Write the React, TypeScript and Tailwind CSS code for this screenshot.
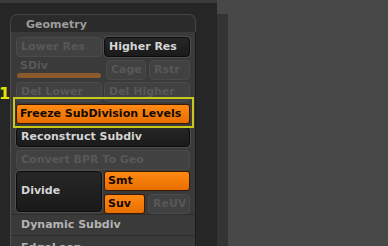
const font = { fontFamily: '"DejaVu Sans", "Liberation Sans", sans-serif' }

function Dim({ label, className = "" }: { label: string; className?: string }) {
  return (
    <div
      className={`flex h-[20px] items-center overflow-hidden whitespace-nowrap rounded-[4px] border border-[#4a4a4a] bg-[#414141] px-[4px] text-[11px] font-bold text-[#585858] ${className}`}
    >
      {label}
    </div>
  )
}

function Dark({ label, className = "" }: { label: string; className?: string }) {
  return (
    <div
      className={`flex h-[20px] items-center overflow-hidden whitespace-nowrap rounded-[4px] border border-[#0c0c0c] bg-gradient-to-b from-[#262626] to-[#1a1a1a] px-[4px] text-[11px] font-bold text-[#d4d4d4] shadow-[0_0_0_1px_#4e4e4e] ${className}`}
    >
      {label}
    </div>
  )
}

function Orange({ label, className = "" }: { label: string; className?: string }) {
  return (
    <div
      className={`flex h-[20px] items-center overflow-hidden whitespace-nowrap rounded-[3px] border border-[#3a1a00] bg-gradient-to-b from-[#ff8a12] to-[#e86e00] px-[3px] text-[11px] font-bold text-[#140800] ${className}`}
    >
      {label}
    </div>
  )
}

export default function App() {
  return (
    <div className="relative flex h-[246px] w-[388px] overflow-hidden bg-[#484848]" style={font}>
      <div className="flex w-[217px] flex-col">
        <div className="h-[3px] shrink-0 bg-[#3b3b3b]" />
        <div className="flex-1 bg-[#262626] pl-[10px] pt-[11px]">
          <div className="w-[186px]">
            <div className="flex h-[18px] items-center rounded-t-[7px] border border-b-0 border-[#444] bg-[#2b2b2b] pl-[15px] pt-[3px] text-[11px] font-bold text-[#9c9c9c]">
              Geometry
            </div>
            <div className="border-x border-l-[#505050] border-r-[#1c1c1c] bg-[#3a3a3a]">
              <div className="flex flex-col gap-[3px] px-[5px] pt-[5px]">
                <div className="flex gap-[2px]">
                  <Dim label="Lower Res" className="w-[86px]" />
                  <Dark label="Higher Res" className="w-[86px]" />
                </div>
                <div className="flex gap-[3px]">
                  <div className="flex w-[86px] flex-col pl-[1px]">
                    <span className="pl-[3px] text-[11px] font-bold leading-[11px] text-[#585858]">SDiv</span>
                    <div className="mt-[2px] h-[5px] w-[84px] rounded-full bg-[#8a5a2c]" />
                  </div>
                  <Dim label="Cage" className="ml-[1px] w-[40px]" />
                  <Dim label="Rstr" className="w-[41px]" />
                </div>
                <div className="mt-[-1px] flex gap-[2px]">
                  <Dim label="Del Lower" className="w-[86px]" />
                  <Dim label="Del Higher" className="w-[86px]" />
                </div>
                <Orange label="Freeze SubDivision Levels" className="mt-[-1px]" />
                <Dark label="Reconstruct Subdiv" />
                <Dim label="Convert BPR To Geo" />
                <div className="mt-[-2px] flex gap-[2px]">
                  <Dark label="Divide" className="h-[41px] w-[86px]" />
                  <div className="flex w-[86px] flex-col gap-[3px]">
                    <Orange label="Smt" />
                    <div className="flex gap-[3px]">
                      <Orange label="Suv" className="w-[41px]" />
                      <Dim label="ReUV" className="w-[42px]" />
                    </div>
                  </div>
                </div>
              </div>
              <div className="flex h-[21px] items-center border-t border-[#2e2e2e] pl-[10px] text-[11px] font-bold text-[#b4b4b4]">
                Dynamic Subdiv
              </div>
              <div className="flex h-[21px] items-start border-t border-[#2e2e2e] pl-[10px] pt-[5px] text-[11px] font-bold leading-[13px] text-[#b4b4b4]">
                EdgeLoop
              </div>
            </div>
          </div>
        </div>
      </div>
      <div className="mt-[14px] w-[11px] bg-[#343434]" />
      <div className="flex-1" />
      <div className="absolute left-[13px] top-[97px] h-[31px] w-[181px] border-2 border-[#c8c81a]" />
      <span className="absolute left-[-1px] top-[86px] text-[16px] font-bold leading-[16px] text-[#e4e400]">1</span>
    </div>
  )
}
